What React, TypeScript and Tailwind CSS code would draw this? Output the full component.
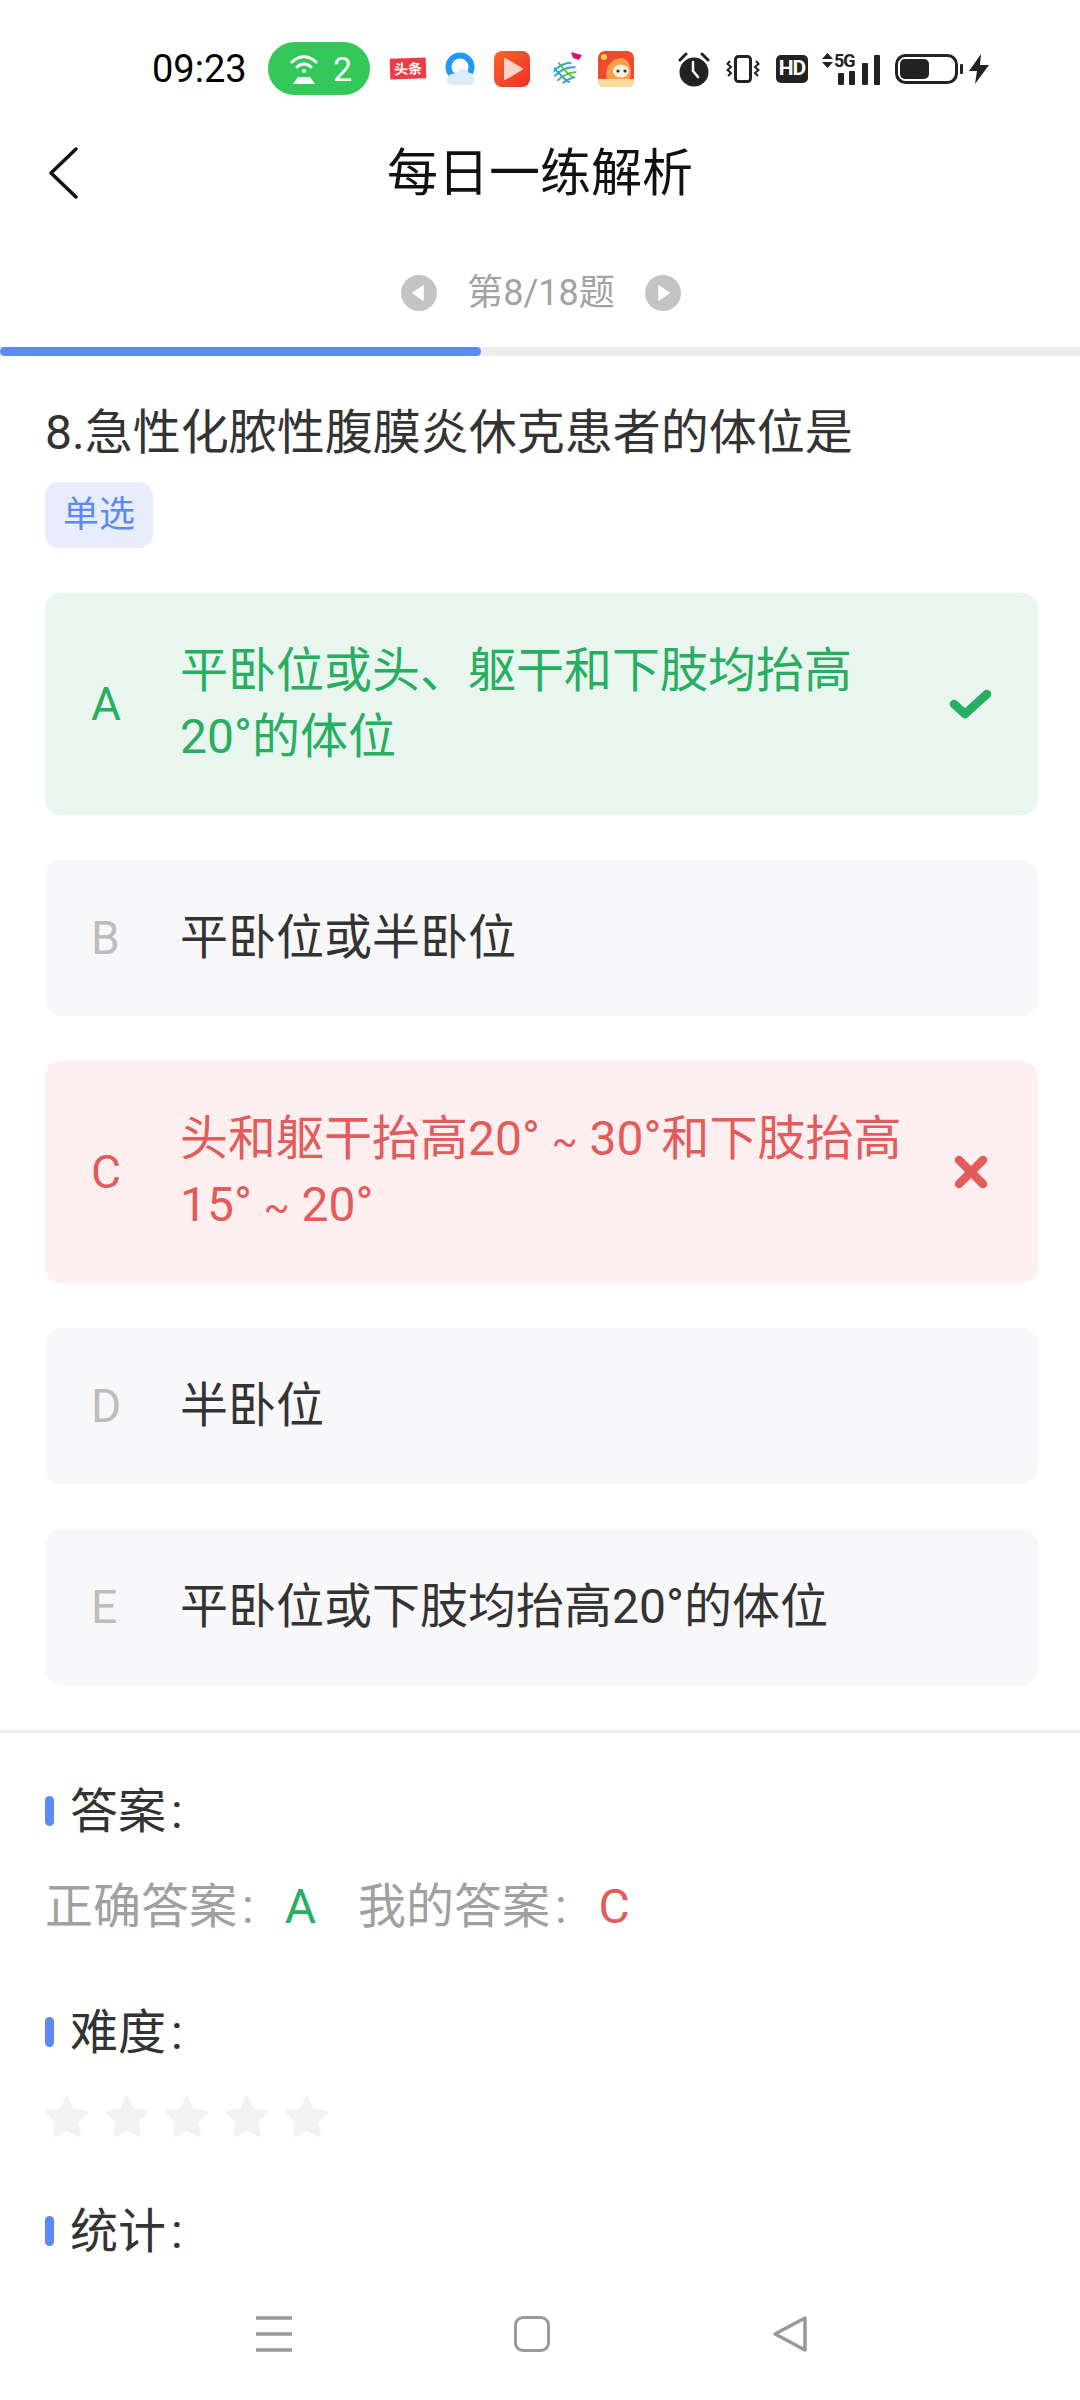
const FONT = "font-['Roboto','Noto_Sans_CJK_SC',sans-serif]";

const options = [
  { key: "A", lines: ["平卧位或头、躯干和下肢均抬高", "20°的体位"], state: "right" },
  { key: "B", lines: ["平卧位或半卧位"], state: "none" },
  { key: "C", lines: ["头和躯干抬高20° ~ 30°和下肢抬高", "15° ~ 20°"], state: "wrong" },
  { key: "D", lines: ["半卧位"], state: "none" },
  { key: "E", lines: ["平卧位或下肢均抬高20°的体位"], state: "none" },
];

const CheckMark = () => (
  <svg width="44" height="30" viewBox="0 0 44 30">
    <path d="M5 15 L16 25 L38 5" fill="none" stroke="#27ae60" strokeWidth="8.5" strokeLinecap="round" strokeLinejoin="round" />
  </svg>
);

const CrossMark = () => (
  <svg width="34" height="34" viewBox="0 0 34 34">
    <path d="M5 5 L29 29 M29 5 L5 29" fill="none" stroke="#e25c5c" strokeWidth="8.5" strokeLinecap="round" />
  </svg>
);

const Star = () => (
  <svg width="44" height="44" viewBox="0 0 44 44">
    <path
      d="M22 3 L27.5 15.5 L41 17 L31.5 26.5 L34 40 L22 33.5 L10 40 L12.5 26.5 L3 17 L16.5 15.5 Z"
      fill="#f2f2f2"
      stroke="#f2f2f2"
      strokeWidth="4"
      strokeLinejoin="round"
    />
  </svg>
);

const SectionTitle = ({ title, className }: { title: string; className: string }) => (
  <div className={`flex h-[60px] items-center ${className}`}>
    <span className="h-[30px] w-[9px] rounded-full bg-[#5b8af5]" />
    <span className="ml-[16px] pt-[2px] text-[48px] leading-[58px] text-[#333]">
      {title}
      <span className="ml-[5px]">:</span>
    </span>
  </div>
);

// the tilde sits smaller than the text around it in the reference
const OptionLine = ({ text }: { text: string }) => {
  const parts = text.split("~");
  if (parts.length === 1) return <div>{text}</div>;
  return (
    <div className="h-[66px]">
      {parts[0]}
      <span className="text-[38px] leading-none">~</span>
      {parts[1]}
    </div>
  );
};

const StatusBar = () => (
  <div className="mb-[3px] flex h-[137px] shrink-0 items-center pl-[152px]">
    <span className="w-[94px] text-[38px] leading-none text-black">09:23</span>
    <div className="ml-[22px] flex h-[53px] w-[102px] items-center rounded-full bg-[#34c759] pl-[21px]">
      <svg width="30" height="32" viewBox="0 0 30 32" fill="none" stroke="#fff" strokeWidth="3" strokeLinecap="round">
        <path d="M3 9 C10 2 20 2 27 9" />
        <path d="M8 14 C12 10 18 10 22 14" />
        <circle cx="15" cy="18" r="2" fill="#fff" stroke="none" />
        <path d="M9 24 H21 L26 31 H4 Z" fill="#fff" stroke="none" />
      </svg>
      <span className="ml-[14px] text-[34px] leading-none text-white">2</span>
    </div>
    <div className="ml-[20px] flex h-[21px] w-[36px] -rotate-2 items-center justify-center bg-[#ee3b45]">
      <span className="text-[14px] font-bold leading-none text-white">头条</span>
    </div>
    <svg className="ml-[18px]" width="34" height="34" viewBox="0 0 34 34">
      <circle cx="16" cy="15" r="11.5" fill="none" stroke="#1e9bf0" strokeWidth="6" />
      <path d="M3 28 C3 22 9 21 12 22 C14 16 23 15 25 21 C31 20 33 32 27 33 H8 C5 33 3 31 3 28 Z" fill="#dcecf8" />
    </svg>
    <svg className="ml-[16px]" width="36" height="36" viewBox="0 0 36 36">
      <defs>
        <linearGradient id="videoBg" x1="0" y1="0" x2="1" y2="1">
          <stop offset="0" stopColor="#f7652a" />
          <stop offset="1" stopColor="#ee3026" />
        </linearGradient>
      </defs>
      <rect width="36" height="36" rx="8" fill="url(#videoBg)" />
      <path d="M11 8 L28 18 L11 28 Z" fill="#fcd3c6" stroke="#fcd3c6" strokeWidth="2" strokeLinejoin="round" />
    </svg>
    <svg className="ml-[23px]" width="30" height="36" viewBox="0 0 30 36" fill="none" strokeWidth="2">
      <defs>
        <clipPath id="mobileGlobe">
          <circle cx="12" cy="21" r="11.5" />
        </clipPath>
      </defs>
      <path d="M18 1 L29 4 L26 9 L20 7 Z" fill="#d6127f" stroke="none" />
      <g clipPath="url(#mobileGlobe)">
        <path d="M0 21 C6 14 12 12 22 11" stroke="#2aa7d8" />
        <path d="M0 27 C8 18 14 16 25 16" stroke="#2aa7d8" />
        <path d="M3 31 C10 24 16 21 26 21" stroke="#6fba44" />
        <path d="M8 34 C13 29 18 26 26 26" stroke="#2aa7d8" />
        <path d="M0 15 C6 23 12 29 20 34" stroke="#2aa7d8" />
        <path d="M5 11 C10 18 16 25 25 29" stroke="#6fba44" />
      </g>
    </svg>
    <svg className="ml-[15px]" width="36" height="36" viewBox="0 0 36 36">
      <rect width="36" height="36" rx="7" fill="#f04a2c" />
      <path d="M9 28 C6 16 14 7 24 7 C32 9 34 18 32 28 Z" fill="#f6a04a" />
      <ellipse cx="23" cy="20" rx="8" ry="6.5" fill="#fdeee0" />
      <circle cx="20" cy="20" r="1.6" fill="#333" />
      <circle cx="27" cy="20" r="1.6" fill="#333" />
      <circle cx="6" cy="6" r="3" fill="#fbd34d" />
      <path d="M0 28 H36 V29 C36 33 33 36 29 36 H7 C3 36 0 33 0 29 Z" fill="#fbdc9c" />
    </svg>
    <svg className="ml-[44px]" width="32" height="36" viewBox="0 0 32 36">
      <path d="M2 9 L8 3 M30 9 L24 3" stroke="#222" strokeWidth="3" strokeLinecap="round" />
      <circle cx="16" cy="21" r="14.5" fill="#222" />
      <path d="M15 11 V20 L20 26" fill="none" stroke="#fff" strokeWidth="2.5" strokeLinecap="round" />
    </svg>
    <svg className="ml-[16px]" width="34" height="28" viewBox="0 0 34 28" fill="none" stroke="#222">
      <rect x="9.5" y="1.5" width="15" height="25" rx="3" strokeWidth="3" />
      <path d="M4 6 L1.5 9 L5 12 L1.5 15 L5 18 L2 21 M30 6 L32.5 9 L29 12 L32.5 15 L29 18 L32 21" strokeWidth="2" />
    </svg>
    <div className="ml-[16px] flex h-[28px] w-[32px] items-center justify-center rounded-[5px] bg-[#222]">
      <span className="text-[21px] font-bold leading-none tracking-[-1px] text-white">HD</span>
    </div>
    <div className="relative ml-[13px] h-[32px] w-[60px]">
      <svg className="absolute left-0 top-0" width="13" height="16" viewBox="0 0 13 16">
        <path d="M6.5 0 L12 6 H1 Z M6.5 15 L12 9 H1 Z" fill="#222" />
      </svg>
      <span className="absolute left-[13px] top-[-1px] text-[18px] font-bold leading-none tracking-[-1px] text-[#222]">5G</span>
      <svg className="absolute left-0 top-0" width="60" height="32" viewBox="0 0 60 32">
        <rect x="17" y="20" width="6" height="12" rx="1" fill="#222" />
        <rect x="28" y="18" width="6" height="14" rx="1" fill="#222" />
        <rect x="41" y="10" width="6" height="22" rx="1" fill="#222" />
        <rect x="53" y="2" width="6" height="30" rx="1" fill="#222" />
      </svg>
    </div>
    <svg className="ml-[14px]" width="68" height="30" viewBox="0 0 68 30">
      <rect x="1.5" y="1.5" width="60" height="27" rx="9" fill="none" stroke="#222" strokeWidth="3" />
      <rect x="5" y="5" width="29" height="20" rx="5" fill="#222" />
      <rect x="65" y="10" width="3" height="10" rx="1" fill="#222" />
    </svg>
    <svg className="ml-[6px]" width="20" height="30" viewBox="0 0 20 30">
      <path d="M12 0 L0 17 H8 L6 30 L20 11 H11 Z" fill="#222" />
    </svg>
  </div>
);

const PagerArrow = ({ dir }: { dir: "left" | "right" }) => (
  <svg width="36" height="36" viewBox="0 0 36 36">
    <circle cx="18" cy="18" r="18" fill="#c4c4c4" />
    <path d={dir === "left" ? "M22 11 L12 18 L22 25 Z" : "M14 11 L24 18 L14 25 Z"} fill="#fff" stroke="#fff" strokeWidth="1.5" strokeLinejoin="round" />
  </svg>
);

const App = () => {
  return (
    <div className={`flex h-[2400px] w-[1080px] flex-col overflow-hidden bg-white ${FONT}`}>
      <StatusBar />

      <div className="relative flex h-[66px] shrink-0 items-center justify-center">
        <svg className="absolute left-[46px] top-[6px]" width="34" height="54" viewBox="0 0 34 54">
          <path d="M30 3 L5 27 L30 51" fill="none" stroke="#111" strokeWidth="3.5" strokeLinecap="round" strokeLinejoin="round" />
        </svg>
        <span className="text-[51px] leading-none text-[#111]">每日一练解析</span>
      </div>

      <div className="mt-[57px] flex h-[60px] shrink-0 items-center justify-center pl-[2px]">
        <PagerArrow dir="left" />
        <span className="mx-[30px] text-[36px] leading-none text-[#a3a3a3]">第8/18题</span>
        <PagerArrow dir="right" />
      </div>

      <div className="mt-[24px] h-[9px] w-full shrink-0 bg-[#ededed]">
        <div className="h-full w-[481px] rounded-full bg-[#5b8af5]" />
      </div>

      <div className="mt-[45px] pl-[45px] pr-[42px]">
        <div className="text-[48px] leading-[64px] text-[#333]">8.急性化脓性腹膜炎休克患者的体位是</div>
        <div className="mt-[17px] flex h-[66px] w-[108px] items-center justify-center rounded-[14px] bg-[#e8edfb] text-[36px] text-[#5b8af5]">
          单选
        </div>

        <div className="mt-[45px] flex flex-col gap-[45px]">
          {options.map((o) => (
            <div
              key={o.key}
              className={`flex items-center rounded-[16px] py-[45px] pl-[46px] text-[48px] leading-[66px] ${
                o.state === "right"
                  ? "bg-[#e8f6ef] text-[#27ae60]"
                  : o.state === "wrong"
                    ? "bg-[#fdeeef] text-[#e25c5c]"
                    : "bg-[#f8f8fa] text-[#333]"
              }`}
            >
              <span className={`w-[89px] text-[46px] ${o.state === "none" ? "text-[#bdbdbd]" : ""}`}>{o.key}</span>
              <div className="w-[747px]">
                {o.lines.map((l) => (
                  <OptionLine key={l} text={l} />
                ))}
              </div>
              <div className="flex w-[88px] justify-center">
                {o.state === "right" && <CheckMark />}
                {o.state === "wrong" && <CrossMark />}
              </div>
            </div>
          ))}
        </div>
      </div>

      <div className="mt-[45px] h-[3px] shrink-0 bg-[#eeeeee]" />

      <div className="px-[45px]">
        <SectionTitle title="答案" className="mt-[48px]" />
        <div className="mt-[36px] flex h-[60px] items-center text-[48px] text-[#a0a0a0]">
          <span>
            正确答案<span className="ml-[5px]">:</span>
          </span>
          <span className="ml-[31px] text-[#27ae60]">A</span>
          <span className="ml-[42px]">
            我的答案<span className="ml-[5px]">:</span>
          </span>
          <span className="ml-[32px] text-[#e25c5c]">C</span>
        </div>

        <SectionTitle title="难度" className="mt-[65px]" />
        <div className="mt-[33px] flex gap-[16px]">
          <Star />
          <Star />
          <Star />
          <Star />
          <Star />
        </div>

        <SectionTitle title="统计" className="mt-[62px]" />
      </div>

      <div className="relative mt-auto h-[132px] shrink-0">
        <svg className="absolute left-[256px] top-[48px]" width="36" height="36" viewBox="0 0 36 36">
          <path d="M0 2 H36 M0 18 H36 M0 34 H36" stroke="#999" strokeWidth="3.5" />
        </svg>
        <div className="absolute left-[514px] top-[48px] h-[36px] w-[36px] rounded-[9px] border-[3px] border-[#999]" />
        <svg className="absolute left-[772px] top-[47px]" width="36" height="38" viewBox="0 0 36 38">
          <path d="M33 3 V35 L3 19 Z" fill="none" stroke="#999" strokeWidth="3.5" strokeLinejoin="round" />
        </svg>
      </div>
    </div>
  );
};

export default App;
